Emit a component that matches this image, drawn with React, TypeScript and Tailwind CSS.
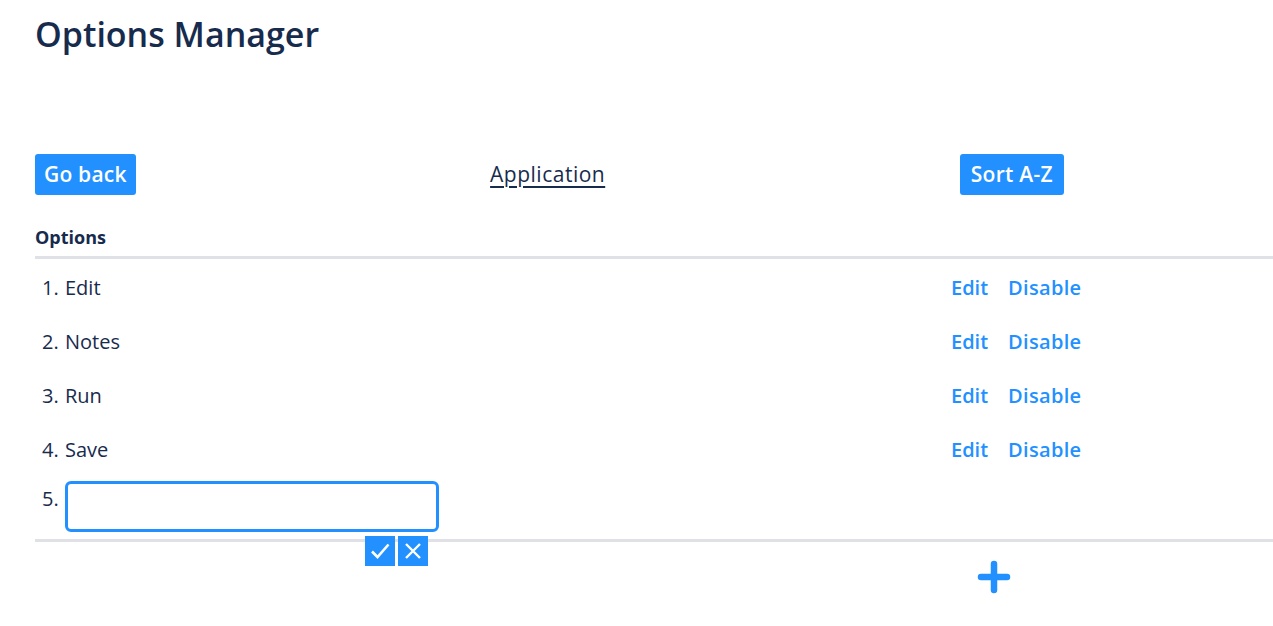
import { useState } from "react";

const options = ["Edit", "Notes", "Run", "Save"];

function PlusIcon() {
  return (
    <svg width="34" height="34" viewBox="0 0 34 34" fill="none">
      <path d="M17 4v26M4 17h26" stroke="#2291FF" strokeWidth="6.5" strokeLinecap="round" />
    </svg>
  );
}

export default function App() {
  const [draft, setDraft] = useState("");

  return (
    <div
      className="min-h-[626px] bg-white text-[#172B4D] pl-[35px]"
      style={{ fontFamily: '"Open Sans", "Noto Sans", sans-serif' }}
    >
      <h1 className="pt-[14px] text-[34px] leading-[40px] font-semibold">Options Manager</h1>

      {/* toolbar */}
      <div className="mt-[100px] flex w-[1029px] items-center justify-between">
        <button
          type="button"
          className="h-[41px] rounded-[3px] bg-[#2291FF] px-[9px] text-[21px] tracking-[0.2px] font-semibold text-white"
        >
          Go back
        </button>
        <a
          href="#"
          className="text-[21px] font-medium tracking-[0.5px] underline underline-offset-[4px] decoration-[2px]"
        >
          Application
        </a>
        <button
          type="button"
          className="h-[41px] rounded-[3px] bg-[#2291FF] px-[11px] text-[21px] tracking-[0.3px] font-semibold text-white"
        >
          Sort A-Z
        </button>
      </div>

      {/* options table */}
      <div className="mt-[30px]">
        <div className="border-b-[3px] border-[#DFE1E6] pb-[7px] text-[18px] font-bold leading-[24px]">
          Options
        </div>

        {options.map((name, i) => (
          <div key={name} className="flex h-[54px] items-center pt-[4px] text-[20px]">
            <span className="w-[23px] pl-[7px] box-content">{i + 1}.</span>
            <span className="flex-1">{name}</span>
            <div className="w-[322px] flex gap-[20px] font-semibold text-[#2291FF]">
              <a href="#">Edit</a>
              <a href="#" className="tracking-[0.3px]">Disable</a>
            </div>
          </div>
        ))}

        <div className="flex items-start border-b-[3px] border-[#DFE1E6] pt-[6px] pb-[7px] text-[20px]">
          <span className="w-[23px] pl-[7px] pt-[3px] box-content">5.</span>
          <div className="relative">
            <input
              value={draft}
              onChange={(e) => setDraft(e.target.value)}
              className="h-[51px] w-[374px] rounded-[6px] border-[3px] border-[#2291FF] px-2 outline-none"
            />
            <div className="absolute right-[11px] top-[calc(100%+4px)] flex gap-[3px]">
              <button type="button" className="flex h-[30px] w-[30px] items-center justify-center bg-[#2291FF]">
                <svg width="22" height="22" viewBox="0 0 22 22" fill="none">
                  <path d="M3 11.5l5.5 5.5L19.5 4.5" stroke="white" strokeWidth="2.6" />
                </svg>
              </button>
              <button type="button" className="flex h-[30px] w-[30px] items-center justify-center bg-[#2291FF]">
                <svg width="20" height="20" viewBox="0 0 20 20" fill="none">
                  <path d="M3 3l14 14M17 3L3 17" stroke="white" strokeWidth="2.4" />
                </svg>
              </button>
            </div>
          </div>
        </div>

        <div className="flex pt-[18px]">
          <button type="button" className="ml-[942px]">
            <PlusIcon />
          </button>
        </div>
      </div>
    </div>
  );
}
